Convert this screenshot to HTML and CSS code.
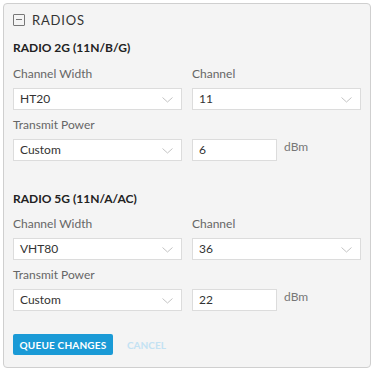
FILE: index.html
```html
<!DOCTYPE html>
<html lang="en">
<head>
    <meta charset="UTF-8">
    <meta name="viewport" content="width=device-width, initial-scale=1.0">
    <title>Radios</title>
    <link rel="stylesheet" href="styles.css">
</head>
<body>
    <div class="panel">
        <div class="panel-header">
            <span class="collapse-icon"></span>
            <span class="panel-title">RADIOS</span>
        </div>

        <div class="section">
            <h3>RADIO 2G (11N/B/G)</h3>
            <div class="row">
                <div class="form-group">
                    <label>Channel Width</label>
                    <div class="select">HT20
                        <svg class="chevron" width="11" height="6" viewBox="0 0 11 6"><polyline points="0.5,0.5 5.5,5 10.5,0.5" fill="none" stroke="#c4c4c4" stroke-width="1"/></svg>
                    </div>
                </div>
                <div class="form-group">
                    <label>Channel</label>
                    <div class="select">11
                        <svg class="chevron" width="11" height="6" viewBox="0 0 11 6"><polyline points="0.5,0.5 5.5,5 10.5,0.5" fill="none" stroke="#c4c4c4" stroke-width="1"/></svg>
                    </div>
                </div>
            </div>
            <div class="row">
                <div class="form-group">
                    <label>Transmit Power</label>
                    <div class="select">Custom
                        <svg class="chevron" width="11" height="6" viewBox="0 0 11 6"><polyline points="0.5,0.5 5.5,5 10.5,0.5" fill="none" stroke="#c4c4c4" stroke-width="1"/></svg>
                    </div>
                </div>
                <div class="form-group power">
                    <div class="input">6</div>
                    <span class="unit">dBm</span>
                </div>
            </div>
        </div>

        <div class="section">
            <h3>RADIO 5G (11N/A/AC)</h3>
            <div class="row">
                <div class="form-group">
                    <label>Channel Width</label>
                    <div class="select">VHT80
                        <svg class="chevron" width="11" height="6" viewBox="0 0 11 6"><polyline points="0.5,0.5 5.5,5 10.5,0.5" fill="none" stroke="#c4c4c4" stroke-width="1"/></svg>
                    </div>
                </div>
                <div class="form-group">
                    <label>Channel</label>
                    <div class="select">36
                        <svg class="chevron" width="11" height="6" viewBox="0 0 11 6"><polyline points="0.5,0.5 5.5,5 10.5,0.5" fill="none" stroke="#c4c4c4" stroke-width="1"/></svg>
                    </div>
                </div>
            </div>
            <div class="row">
                <div class="form-group">
                    <label>Transmit Power</label>
                    <div class="select">Custom
                        <svg class="chevron" width="11" height="6" viewBox="0 0 11 6"><polyline points="0.5,0.5 5.5,5 10.5,0.5" fill="none" stroke="#c4c4c4" stroke-width="1"/></svg>
                    </div>
                </div>
                <div class="form-group power">
                    <div class="input">22</div>
                    <span class="unit">dBm</span>
                </div>
            </div>
        </div>

        <div class="actions">
            <button class="btn-primary">QUEUE CHANGES</button>
            <button class="btn-link">CANCEL</button>
        </div>
    </div>
</body>
</html>
```

FILE: styles.css
```css
body {
    margin: 3px;
    background: #fff;
    font-family: Lato, "Open Sans", sans-serif;
    font-size: 12px;
    color: #333;
}
.panel {
    width: 368px;
    height: 365px;
    box-sizing: border-box;
    background: #f4f4f4;
    border: 1px solid #cfcfcf;
    border-radius: 4px;
    padding: 8px 9px 0 9px;
}
.panel-header {
    display: flex;
    align-items: center;
    height: 16px;
}
.collapse-icon {
    width: 12px;
    height: 12px;
    box-sizing: border-box;
    border: 1px solid #777;
    border-radius: 1px;
    position: relative;
    margin-right: 7px;
}
.collapse-icon::after {
    content: "";
    position: absolute;
    left: 2px;
    right: 2px;
    top: 4px;
    height: 1px;
    background: #777;
}
.panel-title {
    font-size: 13px;
    letter-spacing: 0.8px;
    color: #333;
}
h3 {
    margin: 12px 0 10px;
    font-size: 12px;
    font-weight: bold;
    line-height: 16px;
    color: #222;
}
.section + .section h3 {
    margin-top: 30px;
    margin-bottom: 9px;
}
.row {
    display: grid;
    grid-template-columns: 1fr 1fr;
    gap: 10px;
    margin-bottom: 7px;
}
label {
    display: block;
    line-height: 16px;
    margin-bottom: 6px;
    color: #666;
}
.select, .input {
    height: 22px;
    box-sizing: border-box;
    background: #fff;
    border: 1px solid #dcdcdc;
    padding: 0 6px;
    line-height: 20px;
    color: #333;
    position: relative;
}
.chevron {
    position: absolute;
    right: 8px;
    top: 8px;
}
.power {
    display: flex;
    align-items: flex-end;
}
.input {
    width: 85px;
}
.unit {
    margin-left: 7px;
    margin-bottom: 7px;
    color: #777;
}
.actions {
    display: flex;
    align-items: center;
    margin-top: 23px;
}
.btn-primary {
    height: 21px;
    width: 100px;
    padding: 0;
    border: none;
    border-radius: 2px;
    background: #1a9ad6;
    color: #fff;
    font-family: inherit;
    font-size: 10px;
    font-weight: bold;
    letter-spacing: 0.2px;
}
.btn-link {
    margin-left: 14px;
    border: none;
    background: none;
    padding: 0;
    color: #c3e2f3;
    font-family: inherit;
    font-size: 10px;
    font-weight: bold;
}
```
